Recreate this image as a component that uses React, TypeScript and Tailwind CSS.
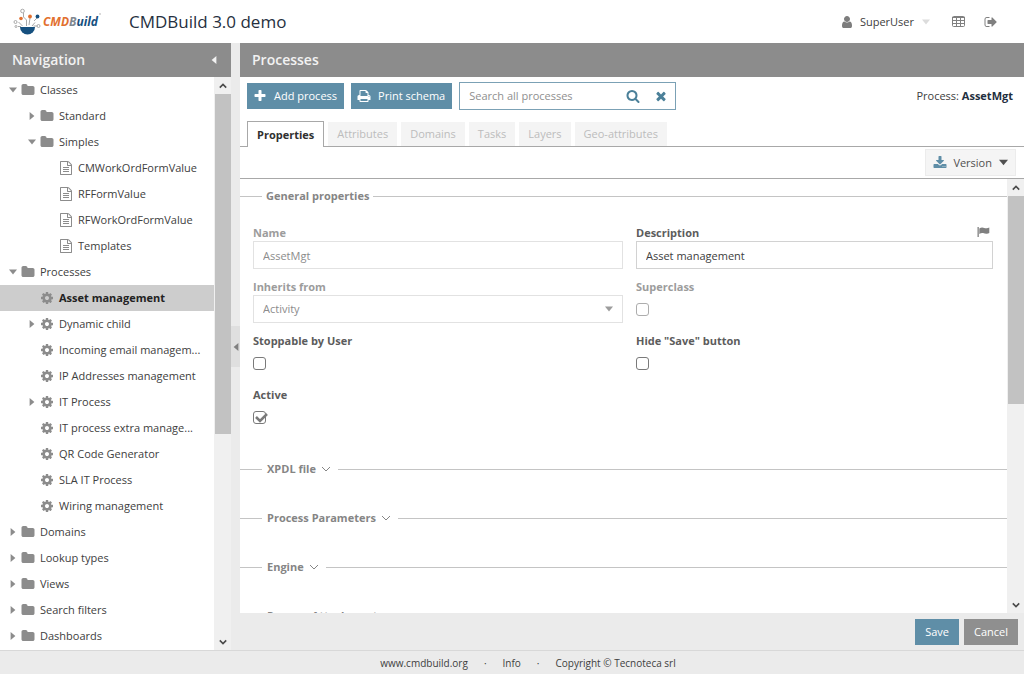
import type { ReactNode } from "react";

interface TreeItem {
  label: string;
  level: 0 | 1 | 2;
  icon: "folder" | "cog" | "file";
  state?: "open" | "closed";
  selected?: boolean;
}

const tree: TreeItem[] = [
  { label: "Classes", level: 0, icon: "folder", state: "open" },
  { label: "Standard", level: 1, icon: "folder", state: "closed" },
  { label: "Simples", level: 1, icon: "folder", state: "open" },
  { label: "CMWorkOrdFormValue", level: 2, icon: "file" },
  { label: "RFFormValue", level: 2, icon: "file" },
  { label: "RFWorkOrdFormValue", level: 2, icon: "file" },
  { label: "Templates", level: 2, icon: "file" },
  { label: "Processes", level: 0, icon: "folder", state: "open" },
  { label: "Asset management", level: 1, icon: "cog", selected: true },
  { label: "Dynamic child", level: 1, icon: "cog", state: "closed" },
  { label: "Incoming email managem...", level: 1, icon: "cog" },
  { label: "IP Addresses management", level: 1, icon: "cog" },
  { label: "IT Process", level: 1, icon: "cog", state: "closed" },
  { label: "IT process extra manage...", level: 1, icon: "cog" },
  { label: "QR Code Generator", level: 1, icon: "cog" },
  { label: "SLA IT Process", level: 1, icon: "cog" },
  { label: "Wiring management", level: 1, icon: "cog" },
  { label: "Domains", level: 0, icon: "folder", state: "closed" },
  { label: "Lookup types", level: 0, icon: "folder", state: "closed" },
  { label: "Views", level: 0, icon: "folder", state: "closed" },
  { label: "Search filters", level: 0, icon: "folder", state: "closed" },
  { label: "Dashboards", level: 0, icon: "folder", state: "closed" },
];

const indent = ["pl-[9px]", "pl-[28px]", "pl-[47px]"];

const tabs = ["Attributes", "Domains", "Tasks", "Layers", "Geo-attributes"];

const paths = {
  plus: "M1600 736v192q0 40-28 68t-68 28h-416v416q0 40-28 68t-68 28h-192q-40 0-68-28t-28-68v-416h-416q-40 0-68-28t-28-68v-192q0-40 28-68t68-28h416v-416q0-40 28-68t68-28h192q40 0 68 28t28 68v416h416q40 0 68 28t28 68z",
  times: "M1490 1322q0 40-28 68l-136 136q-28 28-68 28t-68-28l-294-294-294 294q-28 28-68 28t-68-28l-136-136q-28-28-28-68t28-68l294-294-294-294q-28-28-28-68t28-68l136-136q28-28 68-28t68 28l294 294 294-294q28-28 68-28t68 28l136 136q28 28 28 68t-28 68l-294 294 294 294q28 28 28 68z",
  search: "M1216 832q0-185-131.5-316.5t-316.5-131.5-316.5 131.5-131.5 316.5 131.5 316.5 316.5 131.5 316.5-131.5 131.5-316.5zm512 832q0 52-38 90t-90 38q-54 0-90-38l-343-342q-179 124-399 124-143 0-273.5-55.5t-225-150-150-225-55.5-273.5 55.5-273.5 150-225 225-150 273.5-55.5 273.5 55.5 225 150 150 225 55.5 273.5q0 220-124 399l343 343q37 37 37 90z",
  user: "M1536 1399q0 109-62.5 187t-150.5 78h-854q-88 0-150.5-78t-62.5-187q0-85 8.5-160.5t31.5-152 58.5-131 94-89 134.5-34.5q131 128 313 128t313-128q76 0 134.5 34.5t94 89 58.5 131 31.5 152 8.5 160.5zm-256-887q0 159-112.5 271.5t-271.5 112.5-271.5-112.5-112.5-271.5 112.5-271.5 271.5-112.5 271.5 112.5 112.5 271.5z",
  signOut: "M704 1440q0 4 1 20t.5 26.5-3 23.5-10 19.5-20.5 6.5h-320q-119 0-203.5-84.5t-84.5-203.5v-704q0-119 84.5-203.5t203.5-84.5h320q13 0 22.5 9.5t9.5 22.5q0 4 1 20t.5 26.5-3 23.5-10 19.5-20.5 6.5h-320q-66 0-113 47t-47 113v704q0 66 47 113t113 47h312l11.5 1 11.5 3 8 5.5 7 9 2 13.5zm928-544q0 26-19 45l-544 544q-19 19-45 19t-45-19-19-45v-288h-448q-26 0-45-19t-19-45v-384q0-26 19-45t45-19h448v-288q0-26 19-45t45-19 45 19l544 544q19 19 19 45z",
  folder: "M1728 608v704q0 92-66 158t-158 66h-1216q-92 0-158-66t-66-158v-960q0-92 66-158t158-66h320q92 0 158 66t66 158v32h672q92 0 158 66t66 158z",
  cog: "M1152 896q0-106-75-181t-181-75-181 75-75 181 75 181 181 75 181-75 75-181zm512-109v222q0 12-8 23t-20 13l-185 28q-19 54-39 91 35 50 107 138 10 12 10 25t-9 23q-27 37-99 108t-94 71q-12 0-26-9l-138-108q-44 23-91 38-16 136-29 186-7 28-36 28h-222q-14 0-24.5-8.5t-11.5-21.5l-28-184q-49-16-90-37l-141 107q-10 9-25 9-14 0-25-11-126-114-165-168-7-10-7-23 0-12 8-23 15-21 51-66.5t54-70.5q-27-50-41-99l-183-27q-13-2-21-12.5t-8-23.5v-222q0-12 8-23t19-13l186-28q14-46 39-92-40-57-107-138-10-12-10-24 0-10 9-23 26-36 98.5-107.5t94.5-71.5q13 0 26 10l138 107q44-23 91-38 16-136 29-186 7-28 36-28h222q14 0 24.5 8.5t11.5 21.5l28 184q49 16 90 37l142-107q9-9 24-9 13 0 25 10 129 119 165 170 7 8 7 22 0 12-8 23-15 21-51 66.5t-54 70.5q26 50 41 98l183 28q13 2 21 12.5t8 23.5z",
  file: "M1596 380q28 28 48 76t20 88v1152q0 40-28 68t-68 28h-1344q-40 0-68-28t-28-68v-1600q0-40 28-68t68-28h896q40 0 88 20t76 48zm-444-244v376h376q-10-29-22-41l-313-313q-12-12-41-22zm384 1528v-1024h-416q-40 0-68-28t-28-68v-416h-768v1536h1280zM512 768h768v128h-768zM512 1024h768v128h-768zM512 1280h768v128h-768z",
  download: "M1344 1344q0-26-19-45t-45-19-45 19-19 45 19 45 45 19 45-19 19-45zm256 0q0-26-19-45t-45-19-45 19-19 45 19 45 45 19 45-19 19-45zm128-224v320q0 40-28 68t-68 28h-1472q-40 0-68-28t-28-68v-320q0-40 28-68t68-28h465l135 136q58 56 136 56t136-56l136-136h464q40 0 68 28t28 68zm-325-569q17 41-14 70l-448 448q-18 19-45 19t-45-19l-448-448q-31-29-14-70 17-39 59-39h256v-448q0-26 19-45t45-19h256q26 0 45 19t19 45v448h256q42 0 59 39z",
  print: "M448 1536h896v-256h-896v256zm0-640h896v-384h-160q-40 0-68-28t-28-68v-160h-640v640zm1152 64q0-26-19-45t-45-19-45 19-19 45 19 45 45 19 45-19 19-45zm128 0v416q0 13-9.5 22.5t-22.5 9.5h-224v160q0 40-28 68t-68 28h-960q-40 0-68-28t-28-68v-160h-224q-13 0-22.5-9.5t-9.5-22.5v-416q0-79 56.5-135.5t135.5-56.5h64v-544q0-40 28-68t68-28h672q40 0 88 20t76 48l152 152q28 28 48 76t20 88v256h64q79 0 135.5 56.5t56.5 135.5z",
};

function Glyph({ name, className }: { name: keyof typeof paths; className: string }) {
  return (
    <svg viewBox="0 0 1792 1792" className={`shrink-0 ${className}`} fill="currentColor" aria-hidden="true">
      <path d={paths[name]} />
    </svg>
  );
}

function Triangle({ dir, className }: { dir: "left" | "right" | "down"; className: string }) {
  const points = { left: "8,0 8,10 2,5", right: "2,0 2,10 8,5", down: "0,2 10,2 5,8" };
  return (
    <svg viewBox="0 0 10 10" className={`shrink-0 ${className}`} fill="currentColor" aria-hidden="true">
      <polygon points={points[dir]} />
    </svg>
  );
}

function Chevron({ up, className }: { up?: boolean; className: string }) {
  return (
    <svg viewBox="0 0 10 10" className={`shrink-0 ${className}`} fill="none" stroke="currentColor" aria-hidden="true">
      <path d={up ? "M1 7l4-4 4 4" : "M1 3l4 4 4-4"} />
    </svg>
  );
}

function ScrollBar({ size, className }: { size: number; className: string }) {
  return (
    <div className={`flex shrink-0 flex-col bg-[#f0f0f0] text-[#4a4a4a] ${className}`} aria-hidden="true">
      <div className="flex h-[17px] items-center justify-center">
        <Chevron up className="size-2 stroke-2" />
      </div>
      <div className="min-h-0 flex-1">
        <div className="ml-px bg-[#c2c2c2]" style={{ height: `${size}%` }} />
      </div>
      <div className="flex h-[17px] items-center justify-center">
        <Chevron className="size-2 stroke-2" />
      </div>
    </div>
  );
}

function Logo() {
  return (
    <svg viewBox="0 0 90 30" className="h-[30px] w-[90px] shrink-0" role="img" aria-label="CMDBuild">
      <path d="M7 20h15a7.500 7.500 0 0 1-15 0z" fill="#16507f" />
      <g fill="none" stroke="#a9a9a9">
        <path d="M10.500 6v4l3 3v6M5.500 15l4 4M5 19.500h3M22 15.500l-3 3.500M17 11l-1 7M24 11l-3 3M24.500 19h-4" />
        <circle cx="9.500" cy="4" r="1.800" />
        <circle cx="2.500" cy="15" r="1.500" />
        <circle cx="3" cy="19.500" r="1" />
        <circle cx="25.500" cy="19" r="1.500" />
      </g>
      <circle cx="8" cy="11.500" r="1.800" fill="#e2702f" />
      <circle cx="17" cy="9.500" r="1.900" fill="#e2702f" />
      <circle cx="24.500" cy="9.500" r="1.900" fill="#16507f" />
      <text x="30" y="19" className="font-['Open_Sans',sans-serif] text-[12px] font-bold italic">
        <tspan fill="#e2702f">CMD</tspan>
        <tspan fill="#7f8890">B</tspan>
        <tspan fill="#16507f">uild</tspan>
      </text>
      <circle cx="87" cy="7" r="0.800" fill="#a9a9a9" />
    </svg>
  );
}

function TreeRow({ item }: { item: TreeItem }) {
  return (
    <li>
      <a
        href="#"
        className={`flex h-[26px] items-center gap-1 whitespace-nowrap ${indent[item.level]} ${
          item.selected ? "bg-[#cdcdcd] font-bold text-[#222]" : "text-[#404040]"
        }`}
      >
        <span className="flex w-2 shrink-0 justify-center text-[#8c8c8c]">
          {item.state && <Triangle dir={item.state === "open" ? "down" : "right"} className="size-2" />}
        </span>
        <span className="flex w-[15px] shrink-0 justify-start text-[#8c8c8c]">
          <Glyph name={item.icon} className="size-[14px]" />
        </span>
        {item.label}
      </a>
    </li>
  );
}

function Section({ title, collapsed }: { title: string; collapsed?: boolean }) {
  return (
    <div className="flex h-[18px] items-center gap-1 font-bold text-[#858585]">
      <span className="h-px w-[22px] bg-[#c4c4c4]" />
      {collapsed ? (
        <button type="button" className="flex items-center gap-[5px] px-px" aria-expanded="false">
          {title}
          <Chevron className="mr-[2px] size-[10px]" />
        </button>
      ) : (
        <h2>{title}</h2>
      )}
      <span className="h-px flex-1 bg-[#c4c4c4]" />
    </div>
  );
}

interface FieldProps {
  id: string;
  label: string;
  muted?: boolean;
  extra?: ReactNode;
  children: ReactNode;
}

function Field({ id, label, muted, extra, children }: FieldProps) {
  return (
    <div className="flex flex-col">
      <div className="flex h-[18px] items-end justify-between leading-4">
        <label htmlFor={id} className={`font-bold ${muted ? "text-[#9c9c9c]" : "text-[#5c5c5c]"}`}>
          {label}
        </label>
        {extra}
      </div>
      <div className="flex h-7 items-center">{children}</div>
    </div>
  );
}

function CheckBox({ id, checked, disabled }: { id: string; checked?: boolean; disabled?: boolean }) {
  return (
    <span className="relative flex">
      <input
        id={id}
        type="checkbox"
        defaultChecked={checked}
        disabled={disabled}
        className="peer size-[13px] appearance-none rounded-[3px] border border-[#7a7a7a] disabled:border-[#adadad]"
      />
      <svg
        viewBox="0 0 16 14"
        className="pointer-events-none absolute left-0 top-0 hidden h-[14px] w-4 text-[#7a7a7a] peer-checked:block"
        fill="none"
        stroke="currentColor"
        strokeWidth="2.500"
        aria-hidden="true"
      >
        <path d="M3 6l4 4 7-7" />
      </svg>
    </span>
  );
}

function Header() {
  return (
    <header className="flex h-[43px] shrink-0 items-center bg-white pl-[13px] pr-[26px]">
      <Logo />
      <h1 className="ml-[26px] text-[17px] text-[#263040]">CMDBuild 3.0 demo</h1>
      <button type="button" className="ml-auto flex items-center text-[#404040]">
        <Glyph name="user" className="mr-[6px] size-[14px] text-[#7d7d7d]" />
        SuperUser
        <Triangle dir="down" className="ml-2 size-2 text-[#dcdcdc]" />
      </button>
      <button type="button" className="ml-[22px] text-[#808080]" aria-label="Data view">
        <svg viewBox="0 0 13 11" className="h-[11px] w-[13px]" fill="none" stroke="currentColor" aria-hidden="true">
          <rect x="0.500" y="0.500" width="12" height="10" rx="1" />
          <path d="M0 1.500h13M0 4.500h13M0 7.500h13M4.500 1v10M8.500 1v10" />
        </svg>
      </button>
      <button type="button" className="ml-[19px] text-[#808080]" aria-label="Sign out">
        <Glyph name="signOut" className="size-[14px]" />
      </button>
    </header>
  );
}

function Navigation() {
  return (
    <nav className="flex w-[231px] shrink-0 flex-col bg-white">
      <div className="flex h-[34px] shrink-0 items-center justify-between bg-[#8c8c8c] pl-3 pr-[13px] text-[14px] font-semibold text-[#f2f2f2]">
        Navigation
        <button type="button" aria-label="Collapse navigation">
          <Triangle dir="left" className="size-2" />
        </button>
      </div>
      <div className="flex min-h-0 flex-1">
        <ul className="min-w-0 flex-1 overflow-hidden">
          {tree.map((item) => (
            <TreeRow key={item.label} item={item} />
          ))}
        </ul>
        <ScrollBar size={63} className="w-[17px]" />
      </div>
    </nav>
  );
}

function Toolbar() {
  return (
    <div className="flex h-[38px] shrink-0 items-center gap-[7px] pl-[7px] pr-[11px]">
      <button type="button" className="flex h-[26px] items-center gap-[7px] bg-[#5f8ea7] pl-[6px] pr-[7px] text-white">
        <Glyph name="plus" className="size-[14px]" />
        Add process
      </button>
      <button type="button" className="flex h-[26px] items-center gap-[7px] bg-[#5f8ea7] pl-[6px] pr-[7px] text-white">
        <Glyph name="print" className="size-[14px]" />
        Print schema
      </button>
      <div className="flex h-7 w-[217px] items-center border border-[#7ba1b5] text-[#4b8099]">
        <input
          type="text"
          aria-label="Search all processes"
          placeholder="Search all processes"
          className="min-w-0 flex-1 pl-[9px] text-[#404040] outline-none placeholder:text-[#8f8f8f]"
        />
        <button type="button" className="mr-[14px]" aria-label="Search">
          <Glyph name="search" className="size-[14px]" />
        </button>
        <button type="button" className="mr-[7px]" aria-label="Clear">
          <Glyph name="times" className="size-[14px]" />
        </button>
      </div>
      <p className="ml-auto text-[#404040]">
        Process: <b className="text-[#1f2f40]">AssetMgt</b>
      </p>
    </div>
  );
}

function ProcessForm() {
  return (
    <form className="min-w-0 flex-1 overflow-hidden pt-2">
      <Section title="General properties" />
      <div className="mt-[18px] grid grid-cols-[370fr_357fr] gap-x-[13px] gap-y-2 pl-[13px] pr-[14px]">
        <Field id="name" label="Name" muted>
          <input
            id="name"
            type="text"
            disabled
            defaultValue="AssetMgt"
            className="h-7 w-full border border-[#e2e2e2] px-[9px] text-[#8c8c8c]"
          />
        </Field>
        <Field
          id="description"
          label="Description"
          extra={
            <svg viewBox="0 0 13 12" className="mr-[3px] h-3 w-[13px] self-center text-[#808080]" fill="currentColor" aria-hidden="true">
              <path d="M0.500 1h1.300v10h-1.300zM2.300 2.500q2-1.300 4-.8t3.200.6 2.800-.7v5.400q-1.400 1-3 .8t-3.200-.7-3.800.8z" />
            </svg>
          }
        >
          <input
            id="description"
            type="text"
            defaultValue="Asset management"
            className="h-7 w-full border border-[#d2d2d2] px-[9px] text-[#404040]"
          />
        </Field>
        <Field id="inherits" label="Inherits from" muted>
          <div className="relative flex-1 text-[#9c9c9c]">
            <select
              id="inherits"
              disabled
              className="block h-7 w-full appearance-none border border-[#e2e2e2] px-[9px] text-[#8c8c8c] opacity-100"
            >
              <option>Activity</option>
            </select>
            <Triangle dir="down" className="pointer-events-none absolute right-[10px] top-[10px] size-2" />
          </div>
        </Field>
        <Field id="superclass" label="Superclass" muted>
          <CheckBox id="superclass" disabled />
        </Field>
        <Field id="stoppable" label="Stoppable by User">
          <CheckBox id="stoppable" />
        </Field>
        <Field id="hide-save" label={'Hide "Save" button'}>
          <CheckBox id="hide-save" />
        </Field>
        <Field id="active" label="Active">
          <CheckBox id="active" checked />
        </Field>
      </div>
      <div className="mt-[29px] flex flex-col gap-[31px]">
        <Section title="XPDL file" collapsed />
        <Section title="Process Parameters" collapsed />
        <Section title="Engine" collapsed />
        <Section title="Process Attachments" collapsed />
      </div>
    </form>
  );
}

export default function App() {
  return (
    <div className="flex h-screen flex-col bg-[#ebebeb] font-['Open_Sans',sans-serif] text-[11px] leading-[18px]">
      <Header />
      <div className="flex min-h-0 flex-1">
        <Navigation />
        <div className="flex w-[9px] shrink-0 items-center">
          <button type="button" className="flex h-[41px] w-full items-center justify-center bg-[#dfdfdf] text-[#808080]" aria-label="Toggle navigation">
            <Triangle dir="left" className="size-2" />
          </button>
        </div>
        <main className="flex min-w-0 flex-1 flex-col">
          <div className="flex h-[34px] shrink-0 items-center bg-[#8c8c8c] pl-3 text-[14px] font-semibold text-[#f2f2f2]">
            Processes
          </div>
          <div className="flex min-h-0 flex-1 flex-col bg-white">
            <Toolbar />
            <div role="tablist" className="flex h-8 shrink-0 items-end gap-1 border-b border-[#a8a8a8] pl-[7px]">
              <button
                type="button"
                role="tab"
                aria-selected="true"
                className="-mb-px h-[26px] border border-b-0 border-[#a8a8a8] bg-white px-[9px] font-bold text-[#303030]"
              >
                Properties
              </button>
              {tabs.map((tab) => (
                <button key={tab} type="button" role="tab" disabled className="h-6 bg-[#f4f4f4] px-[9px] text-[#bcbcbc]">
                  {tab}
                </button>
              ))}
            </div>
            <div className="flex h-8 shrink-0 items-center justify-end border-b border-[#a8a8a8] pr-2">
              <button type="button" className="flex h-[27px] items-center border border-[#ececec] bg-[#f5f5f5] px-[7px] text-[#505050]">
                <Glyph name="download" className="mr-[6px] size-[14px] text-[#5f8ea7]" />
                Version
                <Triangle dir="down" className="ml-[7px] size-[9px]" />
              </button>
            </div>
            <div className="flex min-h-0 flex-1">
              <ProcessForm />
              <ScrollBar size={52} className="w-[17px]" />
            </div>
          </div>
          <div className="flex h-[37px] shrink-0 items-center justify-end gap-[5px] pr-[6px] text-white">
            <button type="button" className="h-[26px] bg-[#5f8ea7] px-[10px]">
              Save
            </button>
            <button type="button" className="h-[26px] bg-[#8f8f8f] px-[10px]">
              Cancel
            </button>
          </div>
        </main>
      </div>
      <footer className="flex h-6 shrink-0 items-center justify-center gap-4 border-t border-[#d8d8d8] pl-8 text-[10px] text-[#404040]">
        <a href="#">www.cmdbuild.org</a>
        <span>·</span>
        <a href="#">Info</a>
        <span>·</span>
        <a href="#">Copyright © Tecnoteca srl</a>
      </footer>
    </div>
  );
}
